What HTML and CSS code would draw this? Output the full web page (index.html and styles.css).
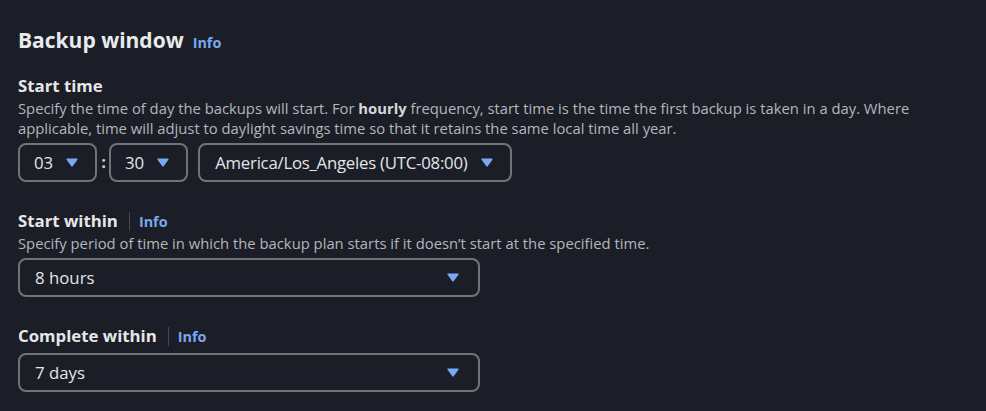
FILE: index.html
```html
<!DOCTYPE html>
<html>
<head>
<meta charset="utf-8">
<link rel="stylesheet" href="styles.css">
</head>
<body>
<div class="panel">
  <h2 class="title"><span>Backup window</span><a class="info info-head">Info</a></h2>

  <div class="field">
    <div class="label">Start time</div>
    <div class="desc">Specify the time of day the backups will start. For <b>hourly</b> frequency, start time is the time the first backup is taken in a day. Where applicable, time will adjust to daylight savings time so that it retains the same local time all year.</div>
    <div class="control row">
      <div class="select small"><span class="value">03</span><svg class="caret" viewBox="0 0 12 9"><path d="M1.2 1.2 H10.8 L6 7.8 Z"/></svg></div>
      <span class="colon">:</span>
      <div class="select small"><span class="value">30</span><svg class="caret" viewBox="0 0 12 9"><path d="M1.2 1.2 H10.8 L6 7.8 Z"/></svg></div>
      <div class="select small tz"><span class="value">America/Los_Angeles (UTC-08:00)</span><svg class="caret" viewBox="0 0 12 9"><path d="M1.2 1.2 H10.8 L6 7.8 Z"/></svg></div>
    </div>
  </div>

  <div class="field">
    <div class="label"><span>Start within</span><span class="sep"></span><a class="info">Info</a></div>
    <div class="desc">Specify period of time in which the backup plan starts if it doesn’t start at the specified time.</div>
    <div class="control">
      <div class="select wide"><span class="value">8 hours</span><svg class="caret" viewBox="0 0 12 9"><path d="M1.2 1.2 H10.8 L6 7.8 Z"/></svg></div>
    </div>
  </div>

  <div class="field">
    <div class="label"><span>Complete within</span><span class="sep"></span><a class="info">Info</a></div>
    <div class="control">
      <div class="select wide"><span class="value">7 days</span><svg class="caret" viewBox="0 0 12 9"><path d="M1.2 1.2 H10.8 L6 7.8 Z"/></svg></div>
    </div>
  </div>
</div>
</body>
</html>
```

FILE: styles.css
```css
html, body {
  margin: 0;
  padding: 0;
  background: #1b1e26;
  height: 100%;
}
body {
  font-family: "Open Sans", "Liberation Sans", sans-serif;
  color: #e6e7ea;
}
.panel {
  padding: 26px 0 0 18px;
  width: 910px;
}
.title {
  margin: 0;
  height: 28px;
  font-size: 21px;
  line-height: 28px;
  font-weight: 700;
  color: #e9eaec;
  display: flex;
  align-items: baseline;
}
.info {
  color: #7aa8f0;
  font-size: 14.4px;
  line-height: 1;
  font-weight: 700;
  text-decoration: none;
}
.info-head {
  margin-left: 9px;
}
.field {
  margin-top: 20px;
}
.field + .field {
  margin-top: 27px;
}
.label {
  height: 24px;
  font-size: 16.8px;
  line-height: 24px;
  font-weight: 700;
  color: #e6e7ea;
  display: flex;
  align-items: baseline;
}
.sep {
  align-self: center;
  width: 1px;
  height: 19px;
  background: #434852;
  margin: 0 9px 0 11px;
}
.desc {
  font-size: 14.8px;
  line-height: 20px;
  color: #b4b6bc;
}
.desc b {
  color: #d6d8dc;
}
.control {
  margin-top: 5px;
}
.row {
  display: flex;
  align-items: center;
}
.select {
  box-sizing: border-box;
  height: 39px;
  border: 2px solid #70737a;
  border-radius: 8px;
  display: flex;
  align-items: center;
  font-size: 16.8px;
  color: #e4e5e8;
}
.select.small {
  padding: 0 17px 0 14px;
  gap: 13px;
}
.select.tz {
  margin-left: 10px;
  padding-left: 15px;
  gap: 14px;
}
.select.tz .value {
  letter-spacing: -0.25px;
}
.select.wide {
  width: 462px;
  padding: 0 19px 0 15px;
  justify-content: space-between;
}
.colon {
  font-size: 16.8px;
  font-weight: 700;
  color: #c9cbd0;
  margin: 0 3px 0 4px;
  line-height: 1;
}
.caret {
  width: 12px;
  height: 9px;
  flex: none;
}
.caret path {
  fill: #78a9f5;
  stroke: #78a9f5;
  stroke-width: 1.6;
  stroke-linejoin: round;
}
```
